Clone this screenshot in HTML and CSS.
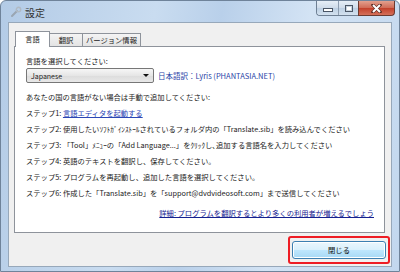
FILE: index.html
```html
<!DOCTYPE html>
<html lang="ja">
<head>
    <meta charset="UTF-8">
    <title>設定</title>
    <link rel="stylesheet" href="styles.css">
</head>
<body>
    <div class="window">
        <div class="titlebar">
            <svg class="app-icon" width="12" height="12" viewBox="0 0 12 12">
                <path d="M2 10 L7 5" stroke="#9aa6b2" stroke-width="2" stroke-linecap="round"/>
                <circle cx="8.5" cy="3.5" r="2.2" fill="none" stroke="#b0bac4" stroke-width="1.4"/>
            </svg>
            <span class="title">設定</span>
            <div class="caption">
                <div class="cap-group">
                    <div class="cap-btn cap-min"><span class="min-glyph"></span></div>
                    <div class="cap-btn cap-max"><span class="max-glyph"></span></div>
                </div>
                <div class="cap-btn cap-close">
                    <svg width="11" height="9" viewBox="0 0 11 9">
                        <path d="M2 1 L9 8 M9 1 L2 8" stroke="#5a2a22" stroke-width="3.2" stroke-linecap="square"/>
                        <path d="M2 1 L9 8 M9 1 L2 8" stroke="#fff" stroke-width="2"/>
                    </svg>
                </div>
            </div>
        </div>

        <div class="client">
            <div class="tabs">
                <div class="tab active">言語</div>
                <div class="tab">翻訳</div>
                <div class="tab">バージョン情報</div>
            </div>
            <div class="panel">
                <div class="label">言語を選択してください:</div>
                <div class="combo-row">
                    <div class="combo">
                        <span>Japanese</span>
                        <span class="arrow"></span>
                    </div>
                    <span class="credit">日本語訳：Lyris (PHANTASIA.NET)</span>
                </div>
                <div class="intro">あなたの国の言語がない場合は手動で追加してください:</div>
                <div class="steps">
                    <div class="step">ステップ1: <a class="link">言語エディタを起動する</a></div>
                    <div class="step">ステップ2: 使用したいｿﾌﾄｶﾞｲﾝｽﾄｰﾙされているフォルダ内の「Translate.sib」を読み込んでください</div>
                    <div class="step">ステップ3: 「Tool」ﾒﾆｭｰの「Add Language...」をｸﾘｯｸし､追加する言語名を入力してください</div>
                    <div class="step">ステップ4: 英語のテキストを翻訳し、保存してください。</div>
                    <div class="step">ステップ5: プログラムを再起動し、追加した言語を選択してください。</div>
                    <div class="step">ステップ6: 作成した「Translate.sib」を「support@dvdvideosoft.com」まで送信してください</div>
                </div>
                <div class="detail"><a class="link dark">詳細: プログラムを翻訳するとより多くの利用者が増えるでしょう</a></div>
            </div>
            <div class="buttons">
                <div class="highlight">
                    <button class="btn">閉じる</button>
                </div>
            </div>
        </div>
    </div>
</body>
</html>
```

FILE: styles.css
```css
body {
    margin: 0;
    padding: 0;
    font-family: "Noto Sans CJK JP", "Noto Sans", sans-serif;
    color: #1a1a1a;
}
.window {
    width: 400px;
    height: 272px;
    box-sizing: border-box;
    padding: 0 7px 4px 7px;
    background: linear-gradient(100deg, #b3cbe6 0%, #c9dcf0 35%, #b9d0ea 50%, #d3e3f4 70%, #c2d7ee 100%);
    border: 1px solid #6f839a;
    border-radius: 6px 6px 0 0;
    display: flex;
    flex-direction: column;
}
.titlebar {
    height: 21px;
    display: flex;
    align-items: center;
    padding-left: 2px;
}
.app-icon {
    margin-right: 3px;
    margin-top: 1px;
}
.title {
    font-size: 10px;
    color: #333;
    margin-top: 1px;
}
.caption {
    margin-left: auto;
    margin-right: -3px;
    align-self: flex-start;
    display: flex;
}
.cap-group {
    display: flex;
    border: 1px solid #6e7f93;
    border-top: none;
    border-right: none;
    border-radius: 0 0 0 4px;
    overflow: hidden;
}
.cap-btn {
    height: 14px;
    display: flex;
    align-items: center;
    justify-content: center;
}
.cap-min, .cap-max {
    background: linear-gradient(#e6eef7, #cfdcea 50%, #bccfe3 51%, #d3e1ef);
}
.cap-min {
    width: 21px;
    border-right: 1px solid #8d9db0;
}
.cap-max {
    width: 19px;
}
.min-glyph {
    width: 8px;
    height: 2px;
    margin-top: 4px;
    background: #fff;
    border: 1px solid #4a5666;
}
.max-glyph {
    width: 6px;
    height: 5px;
    border: 1px solid #4a5666;
    background: #fff;
    box-shadow: inset 0 0 0 1px #c8d4e0;
}
.cap-close {
    width: 35px;
    border: 1px solid #6c3a30;
    border-top: none;
    border-radius: 0 0 4px 0;
    background: linear-gradient(#e2a08e, #d06a55 50%, #c2402a 51%, #d4705a);
}
.client {
    flex: 1;
    background: #f0f0f0;
    border: 1px solid #97a8ba;
    padding: 8px 6px 0 5px;
    display: flex;
    flex-direction: column;
}
.tabs {
    display: flex;
    align-items: flex-end;
    padding-left: 1px;
    height: 15px;
    position: relative;
    z-index: 1;
}
.tab {
    font-size: 7.3px;
    height: 13px;
    line-height: 12px;
    box-sizing: border-box;
    padding: 0;
    text-align: center;
    white-space: nowrap;
    border: 1px solid #8e939b;
    border-bottom: none;
    border-left: none;
    background: linear-gradient(#f4f4f4, #e3e3e3);
    color: #222;
}
.tab:nth-child(2) {
    width: 33px;
}
.tab:nth-child(3) {
    width: 58px;
}
.tab.active {
    width: 35px;
    height: 16px;
    margin-bottom: -1px;
    border-left: 1px solid #8e939b;
    background: #fff;
    line-height: 14px;
}
.panel {
    height: 187px;
    box-sizing: border-box;
    background: #fff;
    border: 1px solid #8e939b;
    padding: 8px 10px 0 11px;
    font-size: 7.3px;
}
.label, .intro {
    line-height: 12px;
}
.combo-row {
    margin-top: 1px;
    display: flex;
    align-items: center;
    gap: 4px;
}
.combo {
    width: 128px;
    height: 15px;
    box-sizing: border-box;
    border: 1px solid #777;
    border-radius: 2px;
    background: linear-gradient(#f6f6f6, #e6e6e6 50%, #dcdcdc 51%, #e8e8e8);
    display: flex;
    align-items: center;
    justify-content: space-between;
    padding: 0 4px 0 4px;
    font-size: 7px;
}
.arrow {
    width: 0;
    height: 0;
    border-left: 3px solid transparent;
    border-right: 3px solid transparent;
    border-top: 3px solid #111;
}
.credit {
    color: #2a3fa6;
    font-size: 7.5px;
}
.intro {
    margin-top: 8px;
}
.steps {
    margin-top: 2px;
}
.step {
    line-height: 16px;
    white-space: nowrap;
}
.link {
    color: #2b46b5;
    text-decoration: underline;
}
.link.dark {
    color: #14208f;
}
.detail {
    margin-top: 6px;
    line-height: 12px;
    text-align: right;
}
.buttons {
    display: flex;
    justify-content: flex-end;
    padding-top: 3px;
    margin-right: -5px;
}
.highlight {
    border: 2px solid #ee1c24;
    border-radius: 3px;
    padding: 3px 2px;
}
.btn {
    display: block;
    width: 94px;
    height: 18px;
    padding: 0;
    font-family: "Noto Sans CJK JP", sans-serif;
    font-size: 7.3px;
    color: #111;
    border: 1px solid #3c7fb1;
    border-radius: 3px;
    background: linear-gradient(#eaf6fd, #d9f0fc 50%, #bee6fd 51%, #a7d9f5);
    box-shadow: inset 0 0 0 1px #fff;
}
```
